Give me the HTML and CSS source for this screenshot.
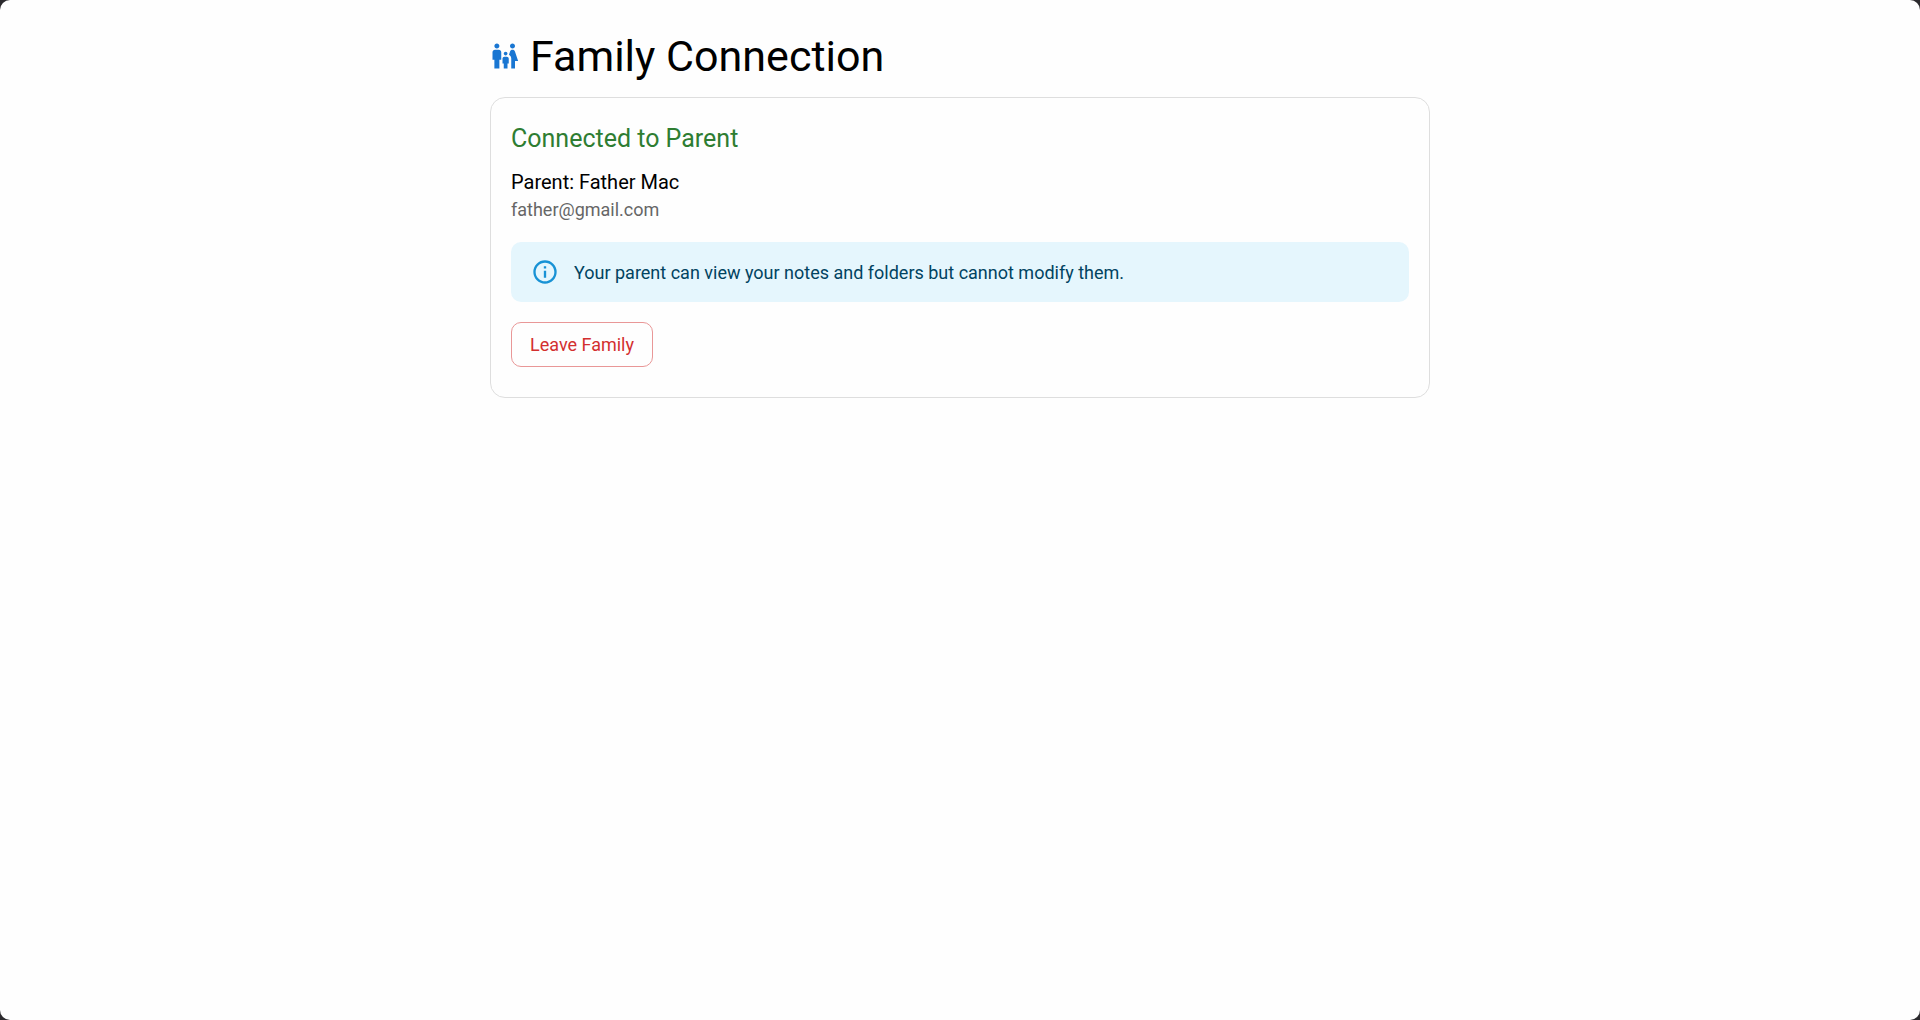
FILE: index.html
```html
<!DOCTYPE html>
<html lang="en">
<head>
  <meta charset="utf-8">
  <meta name="viewport" content="width=device-width, initial-scale=1">
  <title>Family Connection</title>
  <link rel="stylesheet" href="styles.css">
</head>
<body>
  <div class="window">
    <main class="page">
      <header class="page-header">
        <svg class="family-icon" viewBox="0 0 24 24" aria-hidden="true"><path d="M16 4c0-1.11.89-2 2-2s2 .89 2 2-.89 2-2 2-2-.89-2-2zm4 18v-6h2.5l-2.54-7.63C19.68 7.55 18.92 7 18.06 7h-.12c-.86 0-1.63.55-1.9 1.37l-.86 2.58c1.08.6 1.82 1.73 1.82 3.05v8h3zm-7.5-10.5c.83 0 1.5-.67 1.5-1.5s-.67-1.5-1.5-1.5S11 9.17 11 10s.67 1.5 1.5 1.5zM5.5 6c1.11 0 2-.89 2-2s-.89-2-2-2-2 .89-2 2 .89 2 2 2zm2 16v-7H9V9c0-1.1-.9-2-2-2H4c-1.1 0-2 .9-2 2v6h1.5v7h4zm6.5 0v-4h1v-4c0-.82-.68-1.5-1.5-1.5h-2c-.82 0-1.5.68-1.5 1.5v4h1v4h3z"/></svg>
        <h1 class="page-title">Family Connection</h1>
      </header>
      <section class="card">
        <h2 class="card-title">Connected to Parent</h2>
        <p class="parent-name">Parent: Father Mac</p>
        <p class="parent-email">father@gmail.com</p>
        <div class="alert" role="note">
          <svg class="alert-icon" viewBox="0 0 24 24" aria-hidden="true"><path d="M11,9H13V7H11M12,20C7.59,20 4,16.41 4,12C4,7.59 7.59,4 12,4C16.41,4 20,7.59 20,12C20,16.41 16.41,20 12,20M12,2A10,10 0 0,0 2,12A10,10 0 0,0 12,22A10,10 0 0,0 22,12A10,10 0 0,0 12,2M11,17H13V11H11V17Z"/></svg>
          <p class="alert-text">Your parent can view your notes and folders but cannot modify them.</p>
        </div>
        <button class="leave-button" type="button">Leave Family</button>
      </section>
    </main>
  </div>
</body>
</html>
```
FILE: styles.css
```css
* {
  box-sizing: border-box;
}

body {
  margin: 0;
  background: #2b2a2d;
  color: #000;
  font-family: Roboto, "Liberation Sans", sans-serif;
}

h1,
h2,
p {
  margin: 0;
  font-weight: 400;
}

.window {
  min-height: 100vh;
  background: #fefefe;
  border-radius: 10px;
}

.page {
  max-width: 980px;
  margin: 0 auto;
  padding: 30px 20px;
}

.page-header {
  display: flex;
  align-items: center;
  gap: 10px;
  margin-bottom: 15px;
}

.family-icon {
  flex: none;
  width: 30px;
  height: 30px;
  fill: #1976d2;
}

.page-title {
  font-size: 43px;
  line-height: 52px;
}

.card {
  padding: 21px 20px 30px;
  border: 1px solid #dedede;
  border-radius: 15px;
}

.card-title {
  margin-bottom: 8px;
  color: #2e7d32;
  font-size: 25px;
  line-height: 40px;
}

.parent-name {
  font-size: 20px;
  line-height: 30px;
}

.parent-email {
  color: #666;
  font-size: 18px;
  line-height: 25px;
}

.alert {
  display: flex;
  align-items: center;
  gap: 15px;
  min-height: 60px;
  margin: 20px 0;
  padding: 10px 20px;
  border-radius: 10px;
  background: #e5f6fd;
  color: #014361;
}

.alert-icon {
  flex: none;
  width: 28px;
  height: 28px;
  fill: #0288d1;
  opacity: 0.9;
}

.alert-text {
  font-size: 18px;
  line-height: 25px;
}

.leave-button {
  display: block;
  padding: 6px 18px;
  border: 1px solid #e99797;
  border-radius: 10px;
  background: transparent;
  color: #d32f2f;
  font: inherit;
  font-size: 18px;
  line-height: 31px;
  cursor: pointer;
}
```
